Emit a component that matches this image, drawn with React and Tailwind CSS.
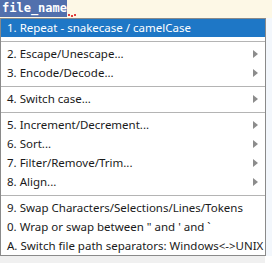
import React from 'react';

const groups = [
  [{ label: '1. Repeat - snakecase / camelCase', active: true }],
  [
    { label: '2. Escape/Unescape...', sub: true },
    { label: '3. Encode/Decode...', sub: true },
  ],
  [{ label: '4. Switch case...', sub: true }],
  [
    { label: '5. Increment/Decrement...', sub: true },
    { label: '6. Sort...', sub: true },
    { label: '7. Filter/Remove/Trim...', sub: true },
    { label: '8. Align...', sub: true },
  ],
  [
    { label: '9. Swap Characters/Selections/Lines/Tokens' },
    { label: '0. Wrap or swap between " and \' and `' },
    { label: 'A. Switch file path separators: Windows<->UNIX' },
  ],
];

function Arrow() {
  return (
    <svg width="5" height="8" viewBox="0 0 5 8" className="absolute right-[7px] top-[6px]">
      <path d="M0 0 L5 4 L0 8 Z" fill="#8c8c8c" />
    </svg>
  );
}

export default function App() {
  return (
    <div className="w-[272px] h-[263px] bg-[#f3f7fc] overflow-hidden flex flex-col">
      {/* editor line */}
      <div className="h-[18px] bg-[#fdf8e6] flex items-start shrink-0">
        <div className="relative h-[17px] w-[67px] bg-[#5270ad] pl-[2px] font-['DejaVu_Sans_Mono',monospace] font-bold text-[12px] leading-[17px] text-white">
          file_name
        </div>
        <div className="ml-[1px] mt-[14px] flex gap-[1px]">
          <span className="w-[2px] h-[2px] bg-[#e04040]" />
          <span className="w-[2px] h-[2px] bg-[#e04040] mt-[1px]" />
          <span className="w-[2px] h-[2px] bg-[#e04040]" />
        </div>
      </div>

      {/* popup menu */}
      <div className="flex">
        <div className="w-[266px] shrink-0 bg-white border border-[#8a8a8a] font-['Noto_Sans',sans-serif] text-[11.5px] text-[#1a1a1a]">
          {groups.map((items, gi) => (
            <div key={gi}>
              {gi > 0 && (
                <div className="pt-[4px] pb-[2px]">
                  <div className="h-px bg-[#b4b4b4]" />
                </div>
              )}
              {items.map((it) => (
                <div
                  key={it.label}
                  className={
                    it.active
                      ? 'relative h-[18px] leading-[18px] pl-[6px] bg-[#1e77c6] text-white whitespace-nowrap'
                      : 'relative h-[19px] leading-[20px] pl-[6px] whitespace-nowrap'
                  }
                >
                  {it.label}
                  {it.sub && <Arrow />}
                </div>
              ))}
            </div>
          ))}
        </div>
      </div>
      <div className="flex-1 flex">
        <div className="w-[265px] bg-[#f0f0f0]" />
        <div className="flex-1 bg-white" />
      </div>
    </div>
  );
}
